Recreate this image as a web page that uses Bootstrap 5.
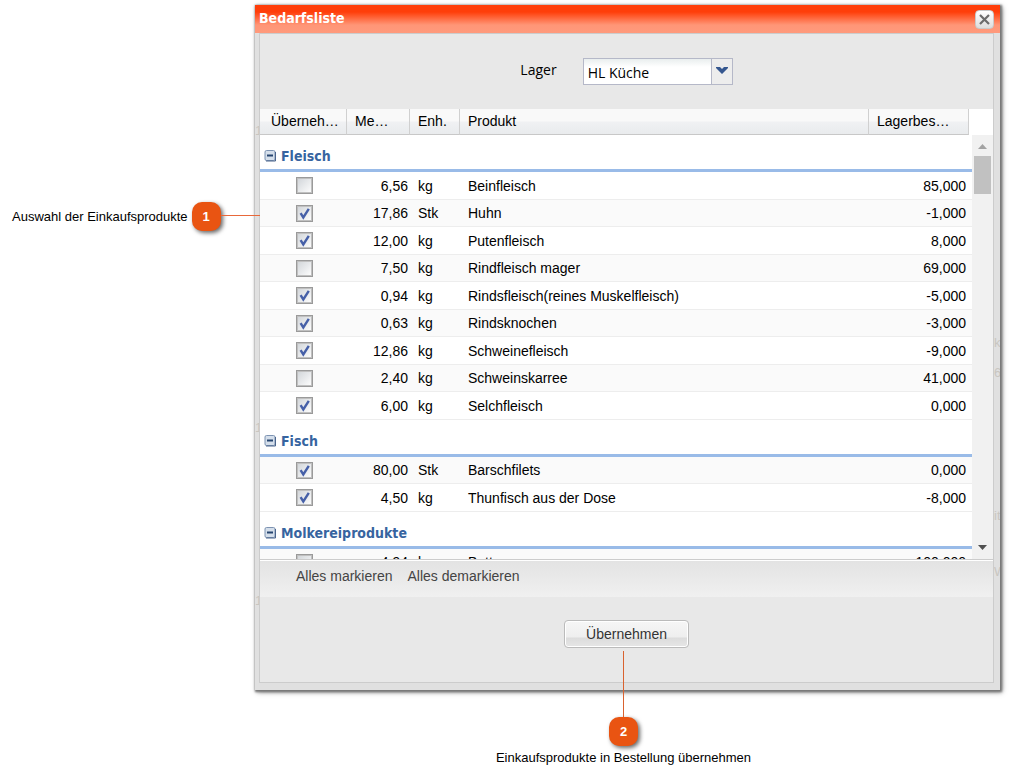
<!DOCTYPE html>
<html lang="de">
<head>
<meta charset="utf-8">
<meta name="viewport" content="width=device-width, initial-scale=1">
<title>Bedarfsliste</title>
<link rel="stylesheet" href="https://cdn.jsdelivr.net/npm/bootstrap@5.3.0/dist/css/bootstrap.min.css">
<style>
  body { font-family: "Liberation Sans", Arial, sans-serif; font-size: 14px; line-height: 20px; color: #000; background: #fff; }
  .page { padding: 5px 9px 0 0; }
  .note { font-size: 13px; line-height: 16px; }
  .note-side { width: 255px; flex: none; padding: 197px 0 0 12px; gap: 4px; }
  .pin { position: relative; flex: none; width: 29px; height: 29px; border-radius: 10px; background: #e95412; color: #fff; font-size: 13px; font-weight: 700; box-shadow: 2px 2px 4px rgba(0,0,0,.6); }
  .pin-line-x::after { content: ""; position: absolute; left: 100%; top: 13px; width: 39px; height: 1px; background: #e8683a; }
  .pin-line-y::after { content: ""; position: absolute; bottom: 100%; left: 14px; width: 1px; height: 66px; background: #d9622f; }
  .note-bottom { padding: 27px 8px 0 0; gap: 4px; }

  .window { position: relative; background: #e0e0e0; padding: 0 6px 7px 4px; box-shadow: 1px 1px 2px 1px #777, 2px 2px 5px rgba(0,0,0,.5); }
  .titlebar { margin: 0 -6px 0 -4px; padding: 0 6px 0 4px; height: 28px; background: linear-gradient(#ff3e0a 0, #ff3e0a 7px, #ff9677 20px, #ff9a7c 28px); }
  .titlebar h1 { font: 700 14px/26px "DejaVu Sans Condensed", "Open Sans", sans-serif; color: #fff; margin: 0; padding-bottom: 2px; }
  .close-btn { width: 19px; height: 19px; padding: 0; border: 1px solid #c9c9c9; border-radius: 4px; background: linear-gradient(#fff, #ddd); }
  .close-btn svg, .twisty svg { display: block; }
  .ghost { position: absolute; top: 28px; bottom: 0; overflow: hidden; color: #c9c6c0; font-size: 13px; line-height: 16px; pointer-events: none; }
  .ghost-left { left: 0; width: 4px; }
  .ghost-right { right: 0; width: 6px; }
  .ghost span { position: absolute; left: 0; }
  .panel { border: 1px solid #ccc; background: #e8e8e8; }
  .form-row { padding: 24px 0; gap: 26px; }
  .form-row label, .form-row select { font: 14px/20px "Open Sans", sans-serif; color: #000; }
  .form-row label { padding-top: 2px; }
  .combo { position: relative; width: 150px; }
  .combo select { appearance: none; width: 100%; height: 27px; padding: 2px 24px 0 4px; border: 1px solid #b5b8c8; border-radius: 0; background: linear-gradient(#e9eeee, #fff 8px); }
  .combo-arrow { position: absolute; right: 1px; top: 1px; width: 21px; height: 25px; border-left: 1px solid #b5b8c8; background: #ededed; pointer-events: none; }

  .list-area { height: 451px; border-bottom: 1px solid #ccc; background: #fff; }
  .list-view { overflow: hidden; min-width: 0; }
  .grid-table { width: 100%; table-layout: fixed; border-collapse: separate; border-spacing: 0; }
  .grid-table thead th { position: sticky; top: 0; z-index: 1; padding: 0; background: #fff; font-weight: 400; }
  .head-cell { height: 26px; padding: 2px 8px 0; border-right: 1px solid #d0d0d0; border-bottom: 1px solid #c8c8c8; background: linear-gradient(#f9f9f9 12px, #f0f1f3 13px, #e9ebed); line-height: 20px; }
  .head-first { padding-left: 11px; }
  .head-last { margin-right: 3px; }
  .group-row th { height: 37px; padding: 8px 4px 0; border-bottom: 3px solid #99bbe8; }
  .group-name { color: #3764a0; font: 700 14px/20px "DejaVu Sans Condensed", "Open Sans", sans-serif; }
  .twisty { padding: 0; border: 0; background: none; }
  .item-row td { height: 28px; padding: 0 8px; border-bottom: 1px solid #ededed; line-height: 20px; }
  .item-alt td { height: 27px; background: #fafafa; }
  .grid-table td.pick { padding: 0 0 0 1px; }
  .grid-table td.amount { padding-right: 2px; }
  .grid-table td.stock { padding-right: 6px; }
  .tick { appearance: none; display: block; margin: 0 auto; width: 17px; height: 17px; border: 1px solid #9a9a9a; outline: 1px solid #c0c0c0; outline-offset: -2px; background: linear-gradient(135deg, #d0d4d8, #fff); }
  .tick:checked { background: url("data:image/svg+xml,%3Csvg xmlns='http://www.w3.org/2000/svg' viewBox='0 0 15 15'%3E%3Cpath d='M3.6 7.2L6.3 11.500L11.800 2.800' fill='none' stroke='%234660a8' stroke-width='2.4'/%3E%3C/svg%3E"), linear-gradient(135deg, #d0d4d8, #fff); }
  .scroll-col { flex: none; width: 21px; margin-top: 26px; background: #f1f1f1; }
  .scroll-thumb { width: 17px; height: 38px; background: #c1c1c1; }

  .tools { height: 37px; padding: 5px 36px 0; gap: 15px; background: linear-gradient(#e3e3e3, #f0f0f0); border-top: 1px solid #fff; }
  .tool-btn { padding: 0; border: 0; background: none; color: #444; line-height: 20px; }
  .actions { padding: 23px 0 34px; }
  .ok-btn { width: 125px; height: 28px; padding: 0; border: 1px solid #bbb; border-radius: 4px; color: #333; box-shadow: inset 0 0 0 1px #fff; background: linear-gradient(#f6f6f6, #eee 16px, #dcdcdc 17px, #e6e6e6); }
</style>
</head>
<body>
<main class="page d-flex align-items-start">
  <div class="note-side note d-flex align-items-center">
    <span class="text-nowrap">Auswahl der Einkaufsprodukte</span>
    <span class="pin pin-line-x d-flex align-items-center justify-content-center z-1">1</span>
  </div>
  <div class="flex-grow-1">
    <section class="window">
      <header class="titlebar d-flex align-items-center justify-content-between">
        <h1>Bedarfsliste</h1>
        <button class="close-btn" type="button" aria-label="Schließen">
          <svg width="17" height="17" viewBox="0 0 17 17"><path d="M4 4l9 9M13 4l-9 9" stroke="#6b6b6b" stroke-width="2.2"/></svg>
        </button>
      </header>
      <!-- page behind the window, showing through its translucent frame -->
      <div class="ghost ghost-left" aria-hidden="true">
        <span style="top:90px">1</span><span style="top:387px">1</span><span style="top:560px">1</span>
      </div>
      <div class="ghost ghost-right" aria-hidden="true">
        <span style="top:302px">k</span><span style="top:332px">6</span><span style="top:475px">it</span><span style="top:531px">W</span>
      </div>
      <div class="panel">
        <div class="form-row d-flex justify-content-center">
          <label for="lager">Lager</label>
          <div class="combo">
            <select id="lager"><option>HL Küche</option></select>
            <span class="combo-arrow"><svg width="20" height="25" viewBox="0 0 20 25"><path d="M4 8h4l2 2 2-2h4v1l-6 6-6-6z" fill="#35578f"/></svg></span>
          </div>
        </div>
        <div class="list-area d-flex">
          <div class="list-view flex-grow-1">
            <table class="grid-table">
              <colgroup><col style="width:87px"><col style="width:63px"><col style="width:50px"><col><col style="width:103px"></colgroup>
              <thead><tr>
                <th><div class="head-cell head-first">Überneh…</div></th>
                <th><div class="head-cell">Me…</div></th>
                <th><div class="head-cell">Enh.</div></th>
                <th><div class="head-cell">Produkt</div></th>
                <th><div class="head-cell head-last">Lagerbes…</div></th>
              </tr></thead>
              <tbody id="rows"></tbody>
            </table>
          </div>
          <div class="scroll-col d-flex flex-column align-items-center">
            <svg width="17" height="21" viewBox="0 0 17 21"><path d="M4 14l4.500-5 4.500 5z" fill="#a3a3a3"/></svg>
            <div class="scroll-thumb"></div>
            <svg class="mt-auto" width="17" height="21" viewBox="0 0 17 21"><path d="M4 7h9l-4.500 5z" fill="#505050"/></svg>
          </div>
        </div>
        <div class="tools d-flex align-items-start">
          <button class="tool-btn" type="button">Alles markieren</button>
          <button class="tool-btn" type="button">Alles demarkieren</button>
        </div>
        <div class="actions d-flex justify-content-center">
          <button class="ok-btn" type="button">Übernehmen</button>
        </div>
      </div>
    </section>
    <div class="note-bottom note d-flex flex-column align-items-center">
      <span class="pin pin-line-y d-flex align-items-center justify-content-center">2</span>
      <span>Einkaufsprodukte in Bestellung übernehmen</span>
    </div>
  </div>
</main>
<script src="https://cdn.jsdelivr.net/npm/bootstrap@5.3.0/dist/js/bootstrap.bundle.min.js"></script>
<script>
  const groups = [
    ["Fleisch", [
      [0, "6,56", "kg", "Beinfleisch", "85,000"],
      [1, "17,86", "Stk", "Huhn", "-1,000"],
      [1, "12,00", "kg", "Putenfleisch", "8,000"],
      [0, "7,50", "kg", "Rindfleisch mager", "69,000"],
      [1, "0,94", "kg", "Rindsfleisch(reines Muskelfleisch)", "-5,000"],
      [1, "0,63", "kg", "Rindsknochen", "-3,000"],
      [1, "12,86", "kg", "Schweinefleisch", "-9,000"],
      [0, "2,40", "kg", "Schweinskarree", "41,000"],
      [1, "6,00", "kg", "Selchfleisch", "0,000"]]],
    ["Fisch", [
      [1, "80,00", "Stk", "Barschfilets", "0,000"],
      [1, "4,50", "kg", "Thunfisch aus der Dose", "-8,000"]]],
    ["Molkereiprodukte", [
      [0, "4,94", "kg", "Butter", "100,000"]]]
  ];
  let n = 0;
  document.getElementById("rows").innerHTML = groups.map(([name, items]) => `
    <tr class="group-row"><th colspan="5"><div class="d-flex align-items-center gap-1">
      <button class="twisty" type="button" aria-label="${name} zuklappen"><svg width="13" height="14" viewBox="0 0 13 14"><rect x="1" y="1.500" width="10" height="10" rx="1.500" fill="#d5dfeb" stroke="#7d93b2"/><path d="M11.500 3v9H2" fill="none" stroke="#4b658c"/><path d="M3 6.500h6" stroke="#26456f" stroke-width="2"/></svg></button>
      <span class="group-name">${name}</span></div></th></tr>` +
    items.map(([on, amount, unit, product, stock]) => `
    <tr class="item-row ${n++ % 2 ? "item-alt" : ""}">
      <td class="pick"><input class="tick" type="checkbox" aria-label="${product} übernehmen" ${on ? "checked" : ""}></td>
      <td class="amount text-end">${amount}</td><td>${unit}</td><td>${product}</td><td class="stock text-end">${stock}</td>
    </tr>`).join("")).join("");
</script>
</body>
</html>
